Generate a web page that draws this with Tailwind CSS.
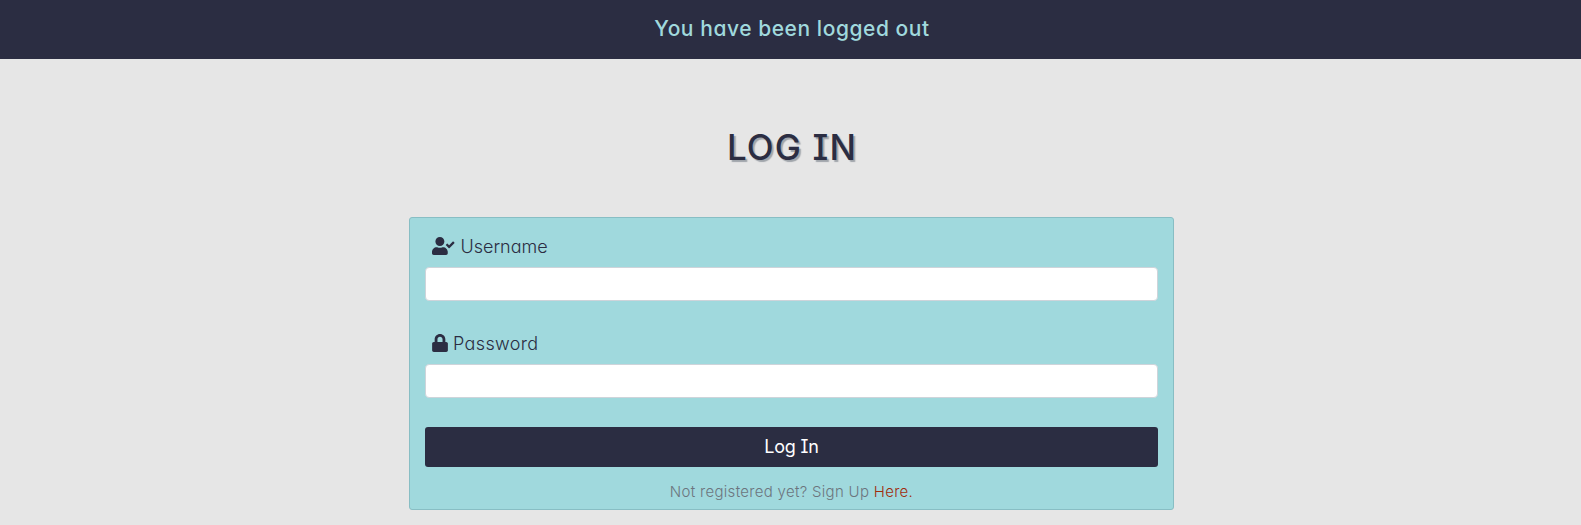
<!DOCTYPE html>
<html lang="en">
<head>
<meta charset="utf-8">
<title>Log In</title>
<script src="https://cdn.jsdelivr.net/npm/@tailwindcss/browser@4"></script>
</head>
<body class="h-[525px] overflow-hidden bg-[#e6e6e6] text-[#2b2d42] font-['Inter',sans-serif] [font-feature-settings:'cv11','cv08']">
<header class="flex h-[59px] items-center justify-center bg-[#2b2d42] pb-[2px] pl-[3px]">
  <p class="whitespace-nowrap text-[21px] leading-7 font-medium tracking-[0.55px] text-[#a0d9dd]">You have been logged out</p>
</header>
<main class="flex flex-col items-center pt-[67px] pl-[2px]">
  <h1 class="whitespace-nowrap pl-px text-[35px] leading-[42px] font-medium tracking-[1.1px] [text-shadow:2px_2px_1px_#a0a5ab]">LOG IN</h1>
  <form class="mt-[49px] h-[293px] w-[765px] rounded-[3px] border border-[#88bec4] bg-[#a0d9dd] px-[15px]">
    <label class="flex h-[49px] items-center pt-[7px] pl-[7px]" for="u">
      <svg class="mr-[6px] h-[18px] w-[22.5px]" viewBox="0 0 640 512" fill="currentColor"><path d="M224 256c70.7 0 128-57.3 128-128S294.7 0 224 0 96 57.3 96 128s57.3 128 128 128zm89.6 32h-16.7c-22.2 10.2-46.9 16-72.9 16s-50.6-5.8-72.9-16h-16.7C60.2 288 0 348.2 0 422.4V464c0 26.5 21.5 48 48 48h352c26.5 0 48-21.5 48-48v-41.6c0-74.2-60.2-134.4-134.4-134.4zm323-128.4l-27.8-28.1c-4.6-4.7-12.1-4.7-16.8-.1l-104.8 104-45.5-45.8c-4.6-4.7-12.1-4.7-16.8-.1l-28.1 27.9c-4.7 4.6-4.7 12.1-.1 16.8l81.7 82.3c4.6 4.7 12.1 4.7 16.8.1l141.3-140.2c4.6-4.7 4.7-12.2.1-16.8z"/></svg>
      <span class="pt-[2px] text-[18px] leading-6 font-light">Username</span>
    </label>
    <input id="u" type="text" class="block h-[34px] w-full rounded-[4px] border border-[#ced4da] bg-white">
    <label class="mt-[15px] flex h-[48px] items-center pt-[5px] pl-[7px]" for="p">
      <svg class="mr-[5px] h-[18px] w-[16px]" viewBox="0 0 448 512" fill="currentColor"><path d="M400 224h-24v-72C376 68.2 307.8 0 224 0S72 68.2 72 152v72H48c-26.5 0-48 21.5-48 48v192c0 26.5 21.5 48 48 48h352c26.5 0 48-21.5 48-48V272c0-26.5-21.5-48-48-48zm-104 0H152v-72c0-39.7 32.3-72 72-72s72 32.3 72 72v72z"/></svg>
      <span class="pt-[2px] text-[18px] leading-6 font-light tracking-[0.35px]">Password</span>
    </label>
    <input id="p" type="password" class="block h-[34px] w-full rounded-[4px] border border-[#ced4da] bg-white">
    <button type="button" class="mt-[29px] block h-[40px] w-full rounded-[3px] bg-[#2b2d42] pb-[2px] text-[18px] font-normal tracking-[-0.2px] text-white">Log In</button>
    <p class="mt-[13px] text-center text-[15px] leading-6 font-light tracking-[0.3px] whitespace-nowrap text-[#6c757d]">Not registered yet? Sign Up <a class="text-[#a02c0c]">Here.</a></p>
  </form>
</main>
</body>
</html>
